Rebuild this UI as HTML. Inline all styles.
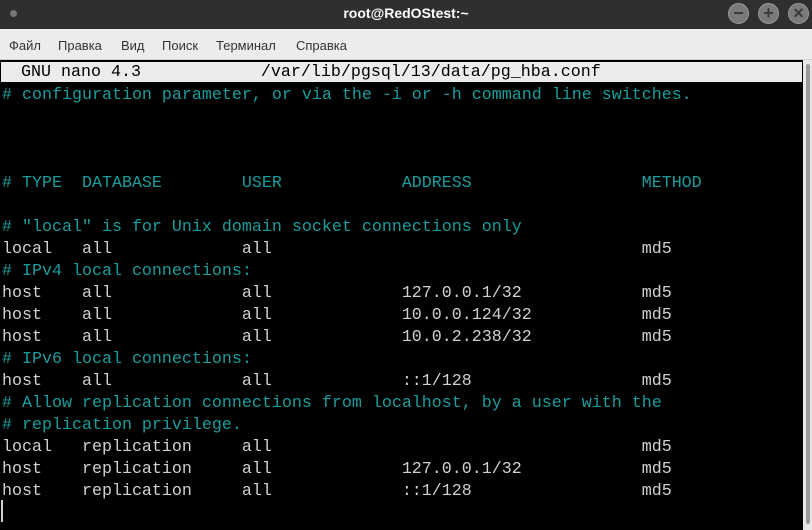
<!DOCTYPE html>
<html><head><meta charset="utf-8"><style>
*{margin:0;padding:0;box-sizing:border-box}
html,body{width:812px;height:530px;overflow:hidden}
body{background:#000;font-family:"Liberation Sans","DejaVu Sans",sans-serif;position:relative}
.title{position:absolute;left:0;top:0;width:812px;height:29px;background:#2f2f2f;color:#fff;font-weight:bold;font-size:14px;text-align:center;line-height:27px}
.dot{position:absolute;left:10px;top:10px;width:7px;height:7px;border-radius:50%;background:#777}
.btn{position:absolute;top:3px;width:21px;height:21px;border-radius:50%;background:#7a7a7a;border:1px solid #999;color:#3a3a3a;font-size:18px;line-height:18px;text-align:center;font-weight:bold}
.menu{position:absolute;left:0;top:29px;width:812px;height:31px;background:#edecea;font-size:13px;color:#333;border-bottom:1px solid #d0d0d0}
.menu span{position:absolute;top:9px}
.term{position:absolute;left:0;top:60px;width:803px;height:470px;background:#000}
.mono{font-family:"Liberation Mono",monospace;font-size:16.67px;line-height:22px;white-space:pre}
.bar{position:absolute;left:0;top:61px;width:803px;height:22px;background:#ececec;color:#000;border:1px solid #000;line-height:22px}
.lines{position:absolute;left:2px;top:85px;color:#d0d0d0}
.c{color:#1b9c9c}
.sb{position:absolute;left:803px;top:60px;width:9px;height:470px;background:#e8e8e8}
.sb div{position:absolute;left:3px;top:4px;width:4px;height:460px;background:#9a9a9a;border-radius:2px}
.cur{position:absolute;left:1px;top:500px;width:2px;height:22px;background:#d0d0d0}
</style></head><body>
<div class="title">root@RedOStest:~</div>
<div class="dot"></div>
<div class="btn" style="left:728px">−</div>
<div class="btn" style="left:758px">+</div>
<div class="btn" style="left:788px">×</div>
<div class="menu"><span style="left:9px">Файл</span><span style="left:58px">Правка</span><span style="left:121px">Вид</span><span style="left:162px">Поиск</span><span style="left:216px">Терминал</span><span style="left:296px">Справка</span></div>
<div class="term"></div>
<div class="bar mono">  GNU nano 4.3            /var/lib/pgsql/13/data/pg_hba.conf</div>
<div class="lines mono"><span class="c"># configuration parameter, or via the -i or -h command line switches.</span>



<span class="c"># TYPE  DATABASE        USER            ADDRESS                 METHOD</span>

<span class="c"># "local" is for Unix domain socket connections only</span>
local   all             all                                     md5
<span class="c"># IPv4 local connections:</span>
host    all             all             127.0.0.1/32            md5
host    all             all             10.0.0.124/32           md5
host    all             all             10.0.2.238/32           md5
<span class="c"># IPv6 local connections:</span>
host    all             all             ::1/128                 md5
<span class="c"># Allow replication connections from localhost, by a user with the</span>
<span class="c"># replication privilege.</span>
local   replication     all                                     md5
host    replication     all             127.0.0.1/32            md5
host    replication     all             ::1/128                 md5</div>
<div class="cur"></div>
<div class="sb"><div></div></div>
</body></html>
